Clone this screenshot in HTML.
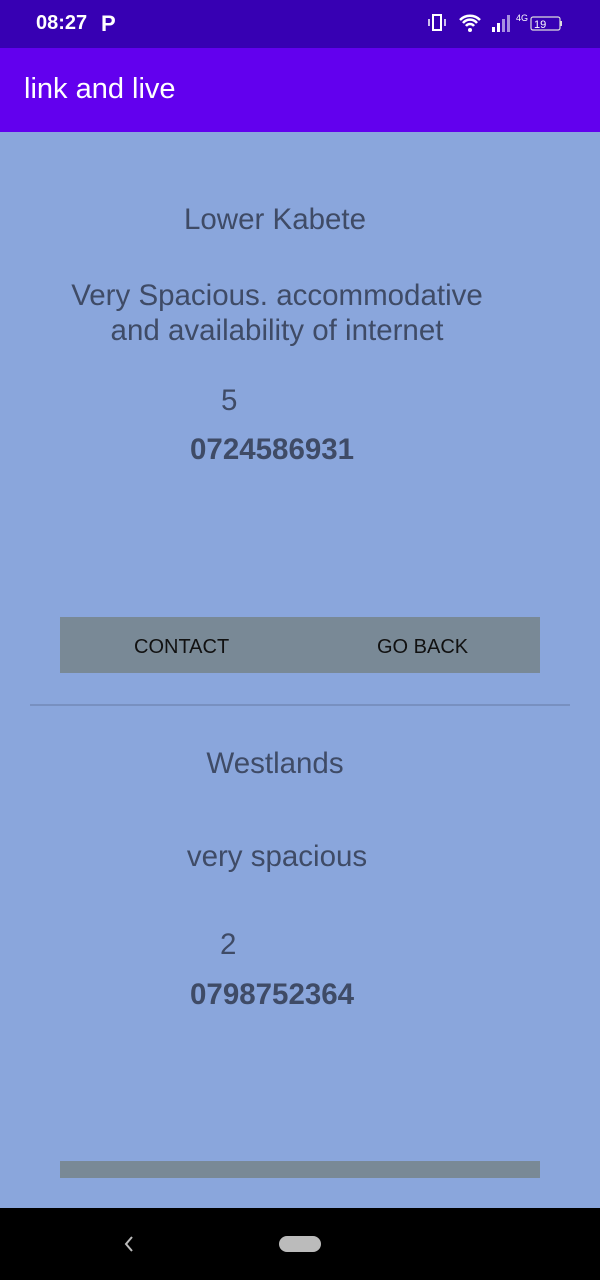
<!DOCTYPE html>
<html><head><meta charset="utf-8"><style>
*{margin:0;padding:0;box-sizing:border-box}
body{width:600px;height:1280px;background:#8aa6dc;font-family:"Liberation Sans",Roboto,sans-serif;position:relative;overflow:hidden;color:#3f4b66}
.sb{position:absolute;left:0;top:0;width:600px;height:48px;background:#3700b3;color:#fff}
.ab{position:absolute;left:0;top:48px;width:600px;height:84px;background:#6200ee;color:#fff;font-size:29px;padding:25px 0 0 24px}
.t{position:absolute;font-size:29.5px;text-align:center;white-space:nowrap}
.btn{position:absolute;background:#798996;height:56px}
.bt{position:absolute;font-size:20px;color:#111;letter-spacing:0px}
.nav{position:absolute;left:0;top:1208px;width:600px;height:72px;background:#000}
</style></head><body>
<div class="sb">
<div style="position:absolute;left:36px;top:12px;font-size:20px;font-weight:bold">08:27</div>
<div style="position:absolute;left:101px;top:11px;font-size:22px;font-weight:bold">P</div>
<svg style="position:absolute;left:428px;top:12px" width="140" height="24" viewBox="0 0 140 24">
<rect x="5" y="3" width="8" height="15" fill="none" stroke="#fff" stroke-width="2"/>
<path d="M1 7v7M17 7v7" stroke="#fff" stroke-width="1.5"/>
<path d="M32 8a14 14 0 0 1 20 0M35 11a9 9 0 0 1 14 0M38 14a5 5 0 0 1 8 0" stroke="#fff" stroke-width="2.5" fill="none"/>
<circle cx="42" cy="18" r="2" fill="#fff"/>
<rect x="64" y="15" width="3" height="5" fill="#fff"/><rect x="69" y="11" width="3" height="9" fill="#fff"/>
<rect x="74" y="7" width="3" height="13" fill="#a88fe0"/><rect x="79" y="3" width="3" height="17" fill="#a88fe0"/>
<text x="88" y="9" font-size="9" fill="#fff" font-family="Liberation Sans">4G</text>
<rect x="103" y="5" width="29" height="13" rx="2" fill="none" stroke="#ddd" stroke-width="1.2"/>
<rect x="132" y="9" width="2" height="5" fill="#ddd"/>
<text x="106" y="16" font-size="11" fill="#fff" font-family="Liberation Sans">19</text>
</svg>
</div>
<div class="ab">link and live</div>

<div class="t" style="left:0;width:550px;top:203px">Lower Kabete</div>
<div class="t" style="left:0;width:554px;top:278px;line-height:35px">Very Spacious. accommodative<br>and availability of internet</div>
<div class="t" style="left:221px;top:384px">5</div>
<div class="t" style="left:190px;top:433px;font-weight:bold">0724586931</div>
<div class="btn" style="left:60px;top:617px;width:480px"></div>
<div class="bt" style="left:134px;top:636px">CONTACT</div>
<div class="bt" style="left:377px;top:636px">GO BACK</div>
<div style="position:absolute;left:30px;top:704px;width:540px;height:2px;background:#7890c0"></div>

<div class="t" style="left:0;width:550px;top:747px">Westlands</div>
<div class="t" style="left:0;width:554px;top:840px">very spacious</div>
<div class="t" style="left:220px;top:928px">2</div>
<div class="t" style="left:190px;top:978px;font-weight:bold">0798752364</div>
<div class="btn" style="left:60px;top:1161px;width:480px;height:17px"></div>

<div class="nav">
<svg style="position:absolute;left:122px;top:26px" width="14" height="20"><path d="M10 3L4 10l6 7" stroke="#bbb" stroke-width="2" fill="none"/></svg>
<div style="position:absolute;left:279px;top:28px;width:42px;height:16px;border-radius:8px;background:#bbb"></div>
</div>
</body></html>
